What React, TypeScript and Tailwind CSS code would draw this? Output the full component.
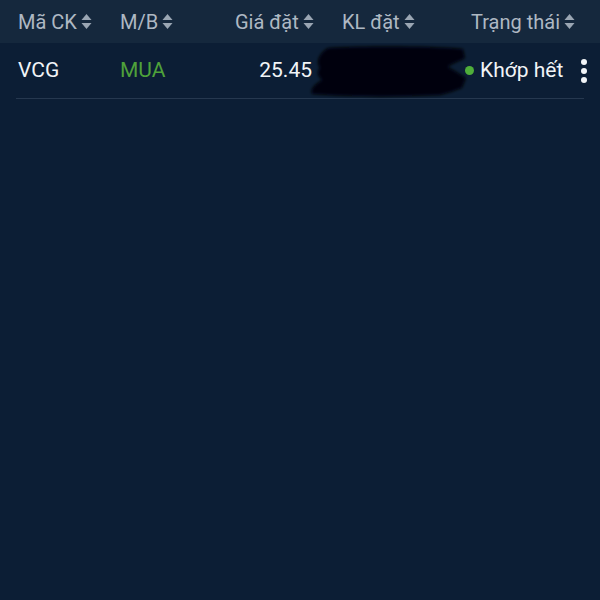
import React from "react"

const SortIcon = () => (
  <svg width="11" height="17" viewBox="0 0 11 17" className="ml-[4px] shrink-0">
    <path d="M5.5 1 L10.5 7 L0.5 7 Z" fill="#9aa6b3" />
    <path d="M5.5 16 L10.5 10 L0.5 10 Z" fill="#9aa6b3" />
  </svg>
)

// the blacked out KL value
const Redaction = () => (
  <svg width="162" height="56" viewBox="0 0 162 56">
    <defs>
      <filter id="soft" x="-10%" y="-20%" width="120%" height="140%">
        <feGaussianBlur stdDeviation="1.8" />
      </filter>
    </defs>
    <path
      d="M20 4 C60 2 120 2 155 5 L157 14 C150 18 142 20 140 23 C146 26 152 30 158 34 L154 44 C146 47 140 49 132 51 C90 53 40 53 4 50 C2 45 6 41 14 36 C10 32 8 28 12 24 C8 18 10 10 20 4 Z"
      fill="#020407"
      filter="url(#soft)"
    />
  </svg>
)

export default function App() {
  return (
    <div className="w-[600px] h-[600px] bg-[#0c1e35] overflow-hidden" style={{ fontFamily: "Roboto, 'Noto Sans', sans-serif" }}>
      {/* header */}
      <div className="h-[43px] bg-[#15283d] flex items-center pl-[18px] text-[20px] text-[#aeb8c3]">
        <div className="w-[102px] flex items-center">Mã CK<SortIcon /></div>
        <div className="w-[115px] flex items-center">M/B<SortIcon /></div>
        <div className="w-[107px] flex items-center">Giá đặt<SortIcon /></div>
        <div className="w-[129px] flex items-center">KL đặt<SortIcon /></div>
        <div className="flex items-center">Trạng thái<SortIcon /></div>
      </div>

      {/* orders */}
      <div className="mx-[16px] border-b border-[#26384f]">
        <div className="h-[55px] flex items-center pl-[2px] text-[21px] text-[#f1f4f7]">
          <div className="w-[102px]">VCG</div>
          <div className="w-[88px] text-[#4fa23a]">MUA</div>
          <div className="w-[104px] text-right">25.45</div>
          <div className="w-[153px] flex items-center">
            <div className="-ml-[4px] mt-[2px]"><Redaction /></div>
          </div>
          <div className="flex items-center">
            <span className="w-[9px] h-[9px] rounded-full bg-[#4fae3a] mr-[6px]"></span>
            <span>Khớp hết</span>
          </div>
          <div className="ml-auto mr-[-3px] flex flex-col gap-[3px] items-center">
            <span className="w-[6px] h-[6px] rounded-full bg-[#f1f4f7]"></span>
            <span className="w-[6px] h-[6px] rounded-full bg-[#f1f4f7]"></span>
            <span className="w-[6px] h-[6px] rounded-full bg-[#f1f4f7]"></span>
          </div>
        </div>
      </div>
    </div>
  )
}
